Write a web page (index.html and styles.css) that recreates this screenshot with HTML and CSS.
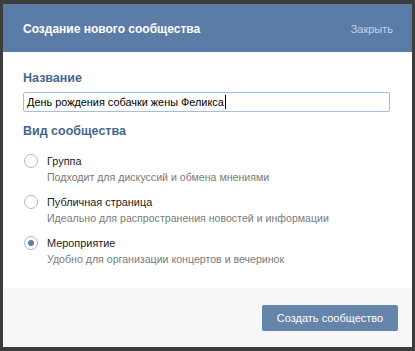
FILE: index.html
```html
<!DOCTYPE html>
<html lang="ru">
<head>
<meta charset="utf-8">
<link rel="stylesheet" href="styles.css">
</head>
<body>
<div class="dialog">
  <div class="header">
    <div class="title">Создание нового сообщества</div>
    <div class="close">Закрыть</div>
  </div>
  <div class="content">
    <div class="label">Название</div>
    <div class="input"><span class="value">День рождения собачки жены Феликса</span><span class="caret"></span></div>
    <div class="label label-type">Вид сообщества</div>
    <div class="options">
      <div class="option">
        <span class="radio"></span>
        <div class="option-text">
          <div class="option-name">Группа</div>
          <div class="option-desc">Подходит для дискуссий и обмена мнениями</div>
        </div>
      </div>
      <div class="option">
        <span class="radio"></span>
        <div class="option-text">
          <div class="option-name">Публичная страница</div>
          <div class="option-desc">Идеально для распространения новостей и информации</div>
        </div>
      </div>
      <div class="option">
        <span class="radio checked"></span>
        <div class="option-text">
          <div class="option-name">Мероприятие</div>
          <div class="option-desc">Удобно для организации концертов и вечеринок</div>
        </div>
      </div>
    </div>
  </div>
  <div class="footer">
    <button class="btn">Создать сообщество</button>
  </div>
</div>
</body>
</html>
```

FILE: styles.css
```css
html, body {
  margin: 0;
  padding: 0;
}
body {
  width: 415px;
  height: 351px;
  background: #3c3c3c;
  font-family: "Liberation Sans", Arial, sans-serif;
  overflow: hidden;
}
.dialog {
  margin: 4px 3px 0 3px;
  width: 409px;
  display: flex;
  flex-direction: column;
}
.header {
  height: 48px;
  background: #5a7ca7;
  display: flex;
  align-items: center;
  justify-content: space-between;
  padding: 1px 19px 0 20px;
  box-sizing: border-box;
}
.title {
  color: #fff;
  font-weight: bold;
  font-size: 12px;
}
.close {
  color: #c4d3e7;
  font-size: 11px;
}
.content {
  background: #fff;
  padding: 17px 22px 21px 20px;
  display: flex;
  flex-direction: column;
}
.label {
  color: #45678f;
  font-weight: bold;
  font-size: 12.5px;
  line-height: 18px;
}
.input {
  margin-top: 5px;
  height: 18px;
  border: 1px solid #a6bdd8;
  border-radius: 2px;
  display: flex;
  align-items: center;
  padding-left: 3px;
  font-size: 10.9px;
  color: #000;
  box-shadow: inset 0 0 1px #dde6f0;
}
.caret {
  width: 1px;
  height: 14px;
  background: #000;
  margin-left: 1px;
}
.label-type {
  margin-top: 10px;
}
.options {
  margin-top: 13px;
  display: flex;
  flex-direction: column;
  gap: 9px;
}
.option {
  display: flex;
  align-items: flex-start;
}
.radio {
  box-sizing: border-box;
  width: 14px;
  height: 14px;
  border: 1px solid #b9b9b9;
  border-radius: 50%;
  background: #fff;
  margin: 1px 9px 0 1px;
  display: flex;
  align-items: center;
  justify-content: center;
  flex-shrink: 0;
}
.radio.checked {
  border-color: #a9b9cc;
}
.radio.checked::after {
  content: "";
  width: 6px;
  height: 6px;
  border-radius: 50%;
  background: #5a7ca7;
}
.option-name {
  font-size: 10.9px;
  line-height: 16px;
  color: #222;
}
.option-desc {
  font-size: 10.6px;
  line-height: 16px;
  color: #7a7a7a;
}
.footer {
  height: 59px;
  background: #f7f7f7;
  display: flex;
  align-items: center;
  justify-content: flex-end;
  padding-right: 14px;
}
.btn {
  width: 136px;
  height: 26px;
  background: #6484a9;
  color: #fff;
  border: none;
  border-radius: 2px;
  font-family: "Liberation Sans", Arial, sans-serif;
  font-size: 11px;
  padding: 0;
}
```
